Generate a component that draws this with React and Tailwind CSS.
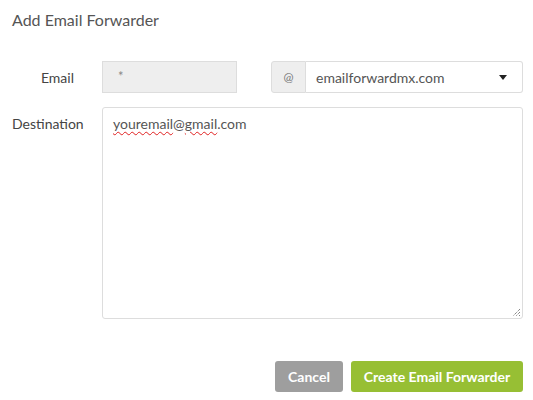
import React from 'react';

const font = { fontFamily: 'Lato, "Open Sans", Arial, sans-serif' };

export default function App() {
  return (
    <div className="w-[533px] h-[400px] bg-white text-[#555]" style={font}>
      <h2 className="pl-[12px] pt-[10px] text-[16px] leading-[20px] text-[#555]">Add Email Forwarder</h2>

      <div className="mt-[31px] flex items-center h-[32px]">
        <label className="w-[102px] pr-[28px] text-right text-[14px] text-[#444]">Email</label>
        <div className="w-[135px] h-[32px] bg-[#eee] border border-[#ddd] pl-[15px] pt-[5px] text-[13px] text-[#888]">*</div>
        <div className="ml-[34px] flex h-[32px]">
          <div className="w-[35px] bg-[#eee] border border-[#ddd] rounded-l-[3px] flex items-center justify-center text-[12px] text-[#777]">@</div>
          <div className="w-[217px] border border-l-0 border-[#ddd] rounded-r-[3px] flex items-center justify-between pl-[10px] pr-[15px] text-[14px] text-[#555]">
            <span>emailforwardmx.com</span>
            <svg width="8" height="5" viewBox="0 0 8 5"><path d="M0 0h8L4 5z" fill="#222" /></svg>
          </div>
        </div>
      </div>

      <div className="mt-[14px] flex items-start">
        <label className="w-[102px] pl-[12px] pt-[7px] text-[14px] leading-[20px] text-[#444]">Destination</label>
        <div className="relative w-[421px] h-[212px] border border-[#ddd] rounded-[3px] px-[10px] pt-[6px] text-[14px] leading-[20px] text-[#555]">
          <span className="underline decoration-wavy decoration-[#e02020] decoration-[1px] underline-offset-[2px]">youremail</span>@<span className="underline decoration-wavy decoration-[#e02020] decoration-[1px] underline-offset-[2px]">gmail</span>.com
          <svg className="absolute right-[1px] bottom-[1px]" width="9" height="9" viewBox="0 0 9 9">
            <path d="M8 1L1 8M8 4L4 8M8 7L7 8" stroke="#555" strokeWidth="1" strokeDasharray="1 1" />
          </svg>
        </div>
      </div>

      <div className="mt-[42px] flex justify-end gap-[8px] pr-[10px]">
        <button className="h-[31px] w-[68px] rounded-[3px] bg-[#9e9e9e] text-white text-[14px] font-bold">Cancel</button>
        <button className="h-[31px] w-[172px] rounded-[3px] bg-[#97bf34] text-white text-[14px] font-bold">Create Email Forwarder</button>
      </div>
    </div>
  );
}
